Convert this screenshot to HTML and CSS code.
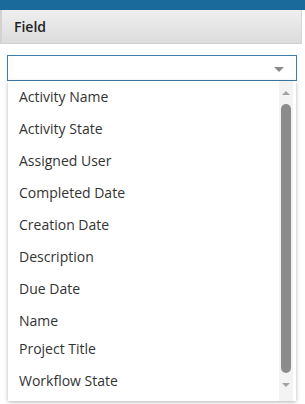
FILE: index.html
```html
<!DOCTYPE html>
<html lang="en">
<head>
    <meta charset="UTF-8">
    <title>Field</title>
    <link rel="stylesheet" href="styles.css">
</head>
<body>
    <div class="topbar"></div>
    <div class="panel">
        <div class="panel-head">Field</div>
        <div class="panel-body">
            <div class="select">
                <span class="select-value"></span>
                <span class="caret"></span>
            </div>
            <!-- open dropdown list -->
            <div class="dropdown">
                <ul class="options">
                    <li>Activity Name</li>
                    <li>Activity State</li>
                    <li>Assigned User</li>
                    <li>Completed Date</li>
                    <li>Creation Date</li>
                    <li>Description</li>
                    <li>Due Date</li>
                    <li>Name</li>
                    <li class="short">Project Title</li>
                    <li class="last">Workflow State</li>
                </ul>
                <div class="scrollbar">
                    <span class="arrow-up"></span>
                    <span class="thumb"></span>
                    <span class="arrow-down"></span>
                </div>
            </div>
        </div>
    </div>
</body>
</html>
```

FILE: styles.css
```css
html, body {
    margin: 0;
    min-height: 404px;
}
body {
    font-family: "Open Sans", "Noto Sans", sans-serif;
    font-size: 14px;
    color: #333;
    background: #fff;
}
.topbar {
    height: 10px;
    background-color: #1b6a9c;
}
.panel {
    position: relative;
}
.panel-head {
    height: 33px;
    line-height: 33px;
    padding-left: 12px;
    font-weight: 600;
    color: #222;
    background: linear-gradient(#efefef, #dcdcdc);
    border-left: 2px solid #d2d2d2;
    border-right: 1px solid #d6d6d6;
    border-bottom: 1px solid #cfcfcf;
    margin-right: 3px;
}
.panel-body {
    padding: 11px 7px;
    min-height: 338px;
    position: relative;
}
.select {
    height: 24px;
    border: 1px solid #3d7eaa;
    margin-right: 1px;
    display: flex;
    justify-content: flex-end;
    align-items: center;
}
.caret {
    width: 0;
    height: 0;
    border-left: 5px solid transparent;
    border-right: 5px solid transparent;
    border-top: 5px solid #8a8a8a;
    margin-right: 12px;
    margin-top: 2px;
}
.dropdown {
    position: absolute;
    top: 37px;
    left: 8px;
    width: 288px;
    height: 320px;
    background: #fff;
    box-shadow: 0 1px 4px rgba(0, 0, 0, 0.3);
    display: flex;
}
.options {
    list-style: none;
    margin: 0;
    padding: 0;
    flex: 1;
}
.options li {
    height: 32px;
    line-height: 32px;
    padding-left: 11px;
}
.options li.short {
    height: 24px;
    line-height: 24px;
}
.options li.last {
    height: 40px;
    line-height: 40px;
}
.scrollbar {
    width: 14px;
    margin-right: 3px;
    background: #f3f3f3;
    display: flex;
    flex-direction: column;
    align-items: center;
    padding-top: 10px;
}
.arrow-up {
    width: 0;
    height: 0;
    border-left: 4px solid transparent;
    border-right: 4px solid transparent;
    border-bottom: 4px solid #a3a3a3;
}
.thumb {
    width: 10px;
    height: 269px;
    margin-top: 9px;
    background: #8c8c8c;
    border-radius: 5px;
}
.arrow-down {
    margin-top: 10px;
    width: 0;
    height: 0;
    border-left: 4px solid transparent;
    border-right: 4px solid transparent;
    border-top: 4px solid #a3a3a3;
}
```
